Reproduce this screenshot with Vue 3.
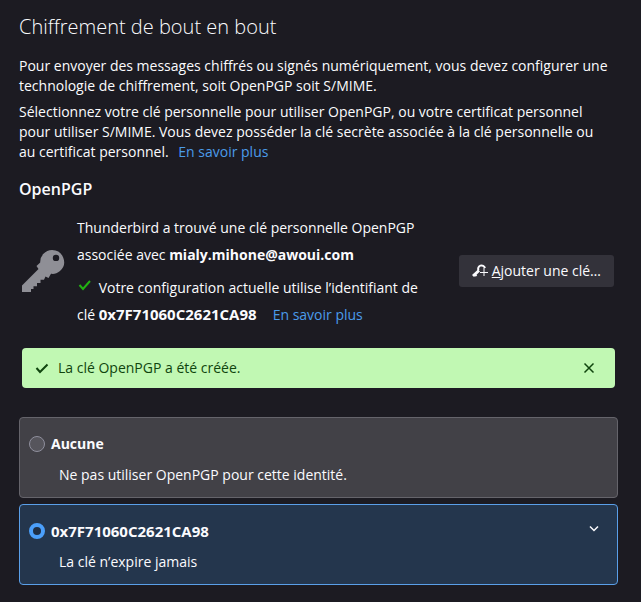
<script setup>
import { ref } from 'vue'

const email = 'mialy.mihone@awoui.com'
const keyId = '0x7F71060C2621CA98'

const showNotice = ref(true)
const selected = ref(keyId)

const options = [
  { value: 'none', label: 'Aucune', text: 'Ne pas utiliser OpenPGP pour cette identité.' },
  { value: keyId, label: keyId, text: 'La clé n’expire jamais', expandable: true }
]
</script>

<template>
  <main class="page">
    <h1>Chiffrement de bout en bout</h1>
    <p class="intro">
      Pour envoyer des messages chiffrés ou signés numériquement, vous devez configurer une
      technologie de chiffrement, soit OpenPGP soit S/MIME.
    </p>
    <p class="intro">
      Sélectionnez votre clé personnelle pour utiliser OpenPGP, ou votre certificat personnel
      pour utiliser S/MIME. Vous devez posséder la clé secrète associée à la clé personnelle ou
      au certificat personnel.
      <a class="more" href="#">En savoir plus</a>
    </p>

    <h2>OpenPGP</h2>
    <section class="status">
      <svg class="key" viewBox="0 0 44 44" aria-hidden="true">
        <path
          fill-rule="evenodd"
          d="M31 1a12 12 0 0 1 8 21c-3 2.500-6 3.300-9 2.800L27.500 29l-3-1.500-1.500 3.200h-3.500V34h-3.500v3.300h-3.500V40H10v3H1v-6.500L17.500 20l-2-3 3.700-3.500A12 12 0 0 1 31 1zm4 4.700a3.200 3.200 0 1 0 0 6.400 3.200 3.200 0 0 0 0-6.400z"
        />
      </svg>
      <div class="details">
        <p>Thunderbird a trouvé une clé personnelle OpenPGP associée avec <b>{{ email }}</b></p>
        <p>
          <svg class="tick" viewBox="0 0 16 16" aria-hidden="true"><path d="M2.500 8l3.500 4 7-8" /></svg>
          Votre configuration actuelle utilise l’identifiant de clé <b class="key-id">{{ keyId }}</b>
          <a class="more wide" href="#">En savoir plus</a>
        </p>
      </div>
      <button class="add" type="button">
        <svg viewBox="0 0 16 16" aria-hidden="true">
          <path d="M6.500 7.500A3.500 3.500 0 1 1 13 5" stroke-width="2" />
          <path d="M7 7.500L1 13" stroke-width="3" />
          <path d="M3 11.500l1.500 1.500" stroke-width="2" />
          <path d="M12 5v8M8 9.500h8" stroke-width="1" />
        </svg>
        <span><u>A</u>jouter une clé…</span>
      </button>
    </section>

    <div v-if="showNotice" class="notice" role="status">
      <svg viewBox="0 0 16 16" aria-hidden="true"><path d="M2.500 8l3.500 4L13.500 4.500" /></svg>
      <span>La clé OpenPGP a été créée.</span>
      <button type="button" aria-label="Fermer" @click="showNotice = false">
        <svg class="close" viewBox="0 0 16 16" aria-hidden="true">
          <path d="M3.500 3.500l9 9M12.500 3.500l-9 9" />
        </svg>
      </button>
    </div>

    <div class="keys" role="radiogroup" aria-label="OpenPGP">
      <div
        v-for="(option, i) in options"
        :key="option.value"
        class="option"
        :class="{ active: selected === option.value }"
      >
        <div class="row">
          <input :id="'key-' + i" v-model="selected" type="radio" name="key" :value="option.value" />
          <label :for="'key-' + i" :class="{ 'key-id': option.expandable }">{{ option.label }}</label>
          <button v-if="option.expandable" type="button" aria-label="Détails">
            <svg class="chevron" viewBox="0 0 16 16" aria-hidden="true"><path d="M4 3.500l4 4 4-4" /></svg>
          </button>
        </div>
        <p>{{ option.text }}</p>
      </div>
    </div>
  </main>
</template>

<style>
body {
  background: #1c1b22;
}
</style>

<style scoped>
.page {
  padding: 11px 23px 17px 19px;
  color: #fbfbfe;
  font: 14px/20px "Open Sans", "Noto Sans", sans-serif;
}

h1 {
  margin: 0 0 13px;
  font-size: 20px;
  line-height: 32px;
  font-weight: 300;
}

h2 {
  margin: 15px 0 13px;
  font-size: 16px;
  line-height: 24px;
  font-weight: 600;
}

p {
  margin: 0;
}

.intro {
  margin: 0 8px 6px 0;
}

.more {
  margin-left: 6px;
  color: #4b9bea;
  text-decoration: none;
}

.more.wide {
  margin-left: 16px;
}

.key-id {
  font-size: 15px;
}

svg {
  display: block;
  flex: none;
  width: 16px;
  height: 16px;
  fill: none;
  stroke: currentColor;
  stroke-width: 2;
}

button {
  padding: 0;
  border: 0;
  background: none;
  color: inherit;
  font: inherit;
}

.status {
  display: flex;
  align-items: center;
  margin-right: 4px;
}

.key {
  width: 44px;
  height: 44px;
  margin: 0 12px 0 2px;
  fill: #8f8f96;
  stroke: none;
}

.details {
  display: grid;
  flex: 1;
  gap: 6px;
  line-height: 27px;
}

.tick {
  display: inline-block;
  margin-right: 2px;
  color: #22b312;
}

.add {
  display: flex;
  align-items: center;
  gap: 4px;
  margin-left: 24px;
  padding: 6px 13px;
  border-radius: 3px;
  background: #33323a;
  white-space: nowrap;
}

.notice {
  display: flex;
  align-items: center;
  gap: 8px;
  margin: 20px 3px 29px;
  padding: 10px 18px 10px 12px;
  border-radius: 4px;
  background: #c1f8b3;
  color: #10450e;
}

.notice span {
  flex: 1;
}

.close,
.chevron {
  stroke-width: 1.5;
}

.keys {
  display: grid;
  gap: 6px;
}

.option {
  padding: 16px 15px 10px 9px;
  border: 1px solid #65646b;
  border-radius: 4px;
  background: #424147;
}

.option.active {
  border-color: #5a9fe8;
  background: #24364d;
}

.option p {
  margin: 11px 0 2px 30px;
}

.row {
  display: flex;
  align-items: center;
  gap: 6px;
}

.row label {
  flex: 1;
  font-weight: 700;
}

input {
  appearance: none;
  flex: none;
  width: 16px;
  height: 16px;
  margin: 0;
  border: 1px solid #8f8f9d;
  border-radius: 50%;
  background: #56555c;
}

input:checked {
  border: 4px solid #4b9ffa;
  background: #1f2f45;
}
</style>
